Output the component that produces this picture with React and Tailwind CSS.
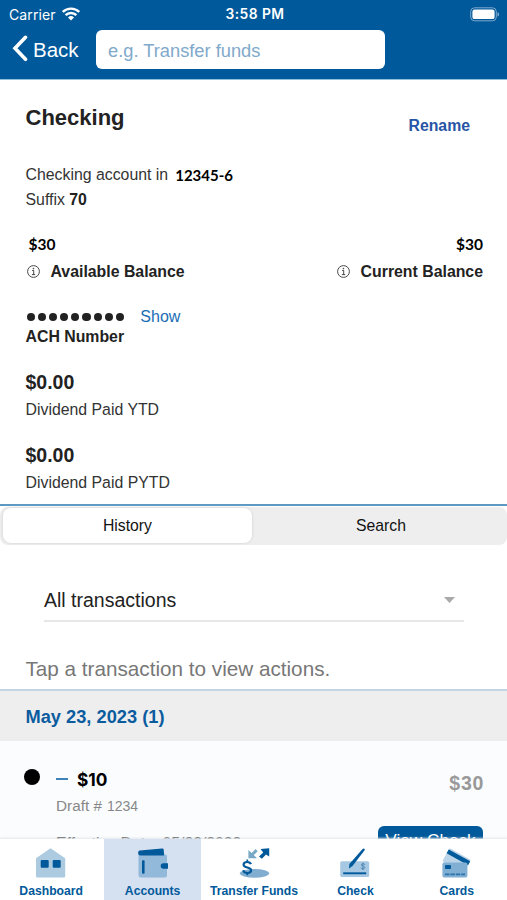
import React from "react";

const sans = "font-['Liberation_Sans',Arial,sans-serif]";

function InfoIcon() {
  return (
    <svg className="h-[13px] w-[13px] shrink-0" viewBox="0 0 13 13" fill="none" stroke="#333" strokeWidth="0.9">
      <circle cx="6.5" cy="6.5" r="5.9" />
      <path d="M5.1 5.5h1.6v4M4.9 9.6h3.3" />
      <circle cx="6.4" cy="3.6" r="0.4" fill="#333" />
    </svg>
  );
}

function WifiIcon() {
  return (
    <svg className="ml-[6px] h-[14px] w-[18px]" viewBox="0 0 18 14" fill="#fff">
      <path d="M9 13.6 6 10.4a4.3 4.3 0 0 1 6 0z" />
      <g fill="none" stroke="#fff" strokeWidth="2.4">
        <path d="M3.6 8.2a7.7 7.7 0 0 1 10.8 0" />
        <path d="M0.8 5a11.7 11.7 0 0 1 16.4 0" />
      </g>
    </svg>
  );
}

function BatteryIcon() {
  return (
    <svg className="h-[15px] w-[31px]" viewBox="0 0 31 15">
      <rect x="0.7" y="0.8" width="25.6" height="13" rx="3.8" fill="none" stroke="#7fa9cc" strokeWidth="1" />
      <rect x="2.4" y="2.5" width="22.2" height="9.6" rx="2.2" fill="#fff" />
      <path d="M27.5 5.2c2.2.6 2.2 3.8 0 4.4z" fill="#7fa9cc" />
    </svg>
  );
}

function DashboardIcon() {
  return (
    <svg className="h-[32px] w-[32px]" viewBox="0 0 32 32">
      <path d="M1 11.2 15.5 1.2 30.2 11.2V29a1.5 1.5 0 0 1-1.5 1.5H2.5A1.5 1.5 0 0 1 1 29z" fill="#accbe1" />
      <rect x="5.7" y="13" width="8" height="7.8" rx="1" fill="#00599a" />
      <rect x="17.7" y="13" width="8" height="7.8" rx="1" fill="#00599a" />
    </svg>
  );
}

function AccountsIcon() {
  return (
    <svg className="h-[32px] w-[32px]" viewBox="0 0 32 32">
      <path d="M1.500 7.500H28q2 0 2 2V28q0 2.500-2.500 2.500H4Q1.500 30.500 1.500 28z" fill="#92b8da" />
      <path d="M1.200 5.200Q1.200 3.600 2.800 3.400L25 1.400q1.600-.1 1.700 1.300l.4 4.700q.1 1.200-1.200 1.200H3.500Q1.200 8.600 1.200 6.500z" fill="#00599a" />
      <rect x="5" y="13.2" width="2.6" height="13.6" rx="1" fill="#00599a" />
      <path d="M31 16.200v5.600h-4.500a2.800 2.800 0 0 1 0-5.600z" fill="#00599a" />
    </svg>
  );
}

function TransferIcon() {
  return (
    <svg className="h-[32px] w-[32px]" viewBox="0 0 32 32">
      <ellipse cx="16.500" cy="26.300" rx="14.600" ry="4.400" fill="#81add0" />
      <path d="M18.400 1.800 14.500 5.700 11.200 2.600V11h8.600L16.600 7.800l3.900-3.800z" fill="#79a8c7" transform="translate(-.8 .3)" />
      <path d="M21 9.600 25.200 5.500 22.600 2l8.600-.8v8.300L28 7.400l-4.100 4.400z" fill="#00599a" />
      <g fill="none" stroke="#00599a" strokeWidth="2.200">
        <path d="M13 17.200c-.6-1.500-2-2.200-3.800-2.200-2.200 0-3.600 1-3.600 2.700 0 3.800 7.500 1.900 7.500 5.600 0 1.700-1.600 2.700-3.700 2.700-2.200 0-3.700-.9-4.200-2.700" />
        <path d="M9.300 12.600v2.700M9.300 25.600v2.600" strokeWidth="1.700" />
      </g>
    </svg>
  );
}

function CheckIcon() {
  return (
    <svg className="h-[32px] w-[32px]" viewBox="0 0 32 32">
      <rect x="1.200" y="14.300" width="29" height="15.800" rx="1.500" fill="#a7c8e2" />
      <path d="M4.200 26.300h23" stroke="#00599a" strokeWidth="1.900" />
      <path d="M25.500 17.400c-.2-1-1-1.300-1.900-1.200-1.900 0-2 2-.1 2.300 2.700.4 2.500 2.900.2 2.900-1.200 0-1.900-.4-2.100-1.300M23.600 15.200v7.400" transform="translate(.3 .5)" fill="none" stroke="#4b86b5" strokeWidth="1" />
      <path d="M23.600 1.900q1.400-.9 2.100.1.300.7-.3 1.600L13.500 19l-3.600 2.400.5-4.300z" fill="#00599a" />
    </svg>
  );
}

function CardsIcon() {
  return (
    <svg className="h-[32px] w-[32px]" viewBox="0 0 32 32">
      <g transform="rotate(29 8 2)">
        <rect x="8" y="1" width="24.500" height="15" rx="1.500" fill="#bcd4e8" />
        <rect x="8" y="2.500" width="24.500" height="4.400" fill="#00599a" />
      </g>
      <rect x="1.400" y="15.500" width="25" height="15" rx="1.800" fill="#81afd3" />
      <rect x="4" y="18" width="6" height="4" rx="1" fill="#00599a" />
      <path d="M4 27.300h20" stroke="#2d73ab" strokeWidth="1.700" strokeDasharray="4.500 0.900" />
    </svg>
  );
}

const tabs = [
  { label: "Dashboard", Icon: DashboardIcon },
  { label: "Accounts", Icon: AccountsIcon, active: true },
  { label: "Transfer Funds", Icon: TransferIcon },
  { label: "Check", Icon: CheckIcon },
  { label: "Cards", Icon: CardsIcon },
];

function Header() {
  return (
    <header className="h-[80px] shrink-0 border-b border-[#8fc0dc] bg-[#00599a] text-white">
      <div className="grid h-[28px] grid-cols-3 items-center pr-[6px] pl-[9px] font-['Inter',sans-serif]">
        <div className="flex items-center text-[14px] tracking-[0.1px]">
          Carrier
          <WifiIcon />
        </div>
        <div className="text-center text-[13.8px] font-semibold tracking-[0.45px]">3:58 PM</div>
        <div className="flex justify-end">
          <BatteryIcon />
        </div>
      </div>
      <div className="flex h-[43px] items-center pl-[12px]">
        <svg className="-mt-[2px] h-[27px] w-[17px]" viewBox="0 0 17 27" fill="none" stroke="#fff" strokeWidth="3.6" strokeLinecap="round">
          <path d="M13.500 2.300 3 13.300 13.500 24.300" />
        </svg>
        <span className="mt-px ml-[4px] w-[46px] text-[20.5px]">Back</span>
        <div className="ml-[17px] flex h-[39px] w-[289px] items-center rounded-[6px] bg-white pl-[12px] text-[18.3px] text-[#80a9cb]">
          <span className="mt-[3px]">e.g. Transfer funds</span>
        </div>
      </div>
    </header>
  );
}

function Amount({ value, label }) {
  return (
    <div>
      <div className="h-[28px] text-[19.5px] leading-[28px] font-bold">{value}</div>
      <div className="h-[28px] text-[15.85px] leading-[28px] text-[#333]">{label}</div>
    </div>
  );
}

function AccountDetails() {
  return (
    <section className="h-[424px] shrink-0 pt-[24px] pr-[24px] pl-[25.5px] text-[15.85px] text-[#222]">
      <div className="flex h-[28px] justify-between">
        <h1 className="text-[22px] leading-[28px] font-bold">Checking</h1>
        <a className="mt-[8px] mr-[13px] text-[15.8px] leading-[28px] font-bold text-[#2754a5]">Rename</a>
      </div>
      <div className="mt-[29px] flex h-[26px] items-center text-[#333]">
        <span className="mt-px">Checking account in</span>
        <span className="mt-[2px] ml-[7px] font-['Lato',sans-serif] text-[15px] font-bold text-black">12345-6</span>
      </div>
      <div className="h-[26px] leading-[26px] text-[#333]">
        Suffix <b className="text-[#222]">70</b>
      </div>
      <div className="mt-[18px] flex h-[28px] items-center justify-between pl-[3px] font-['Lato',sans-serif] text-[15.5px] font-bold text-black">
        <span>$30</span>
        <span>$30</span>
      </div>
      <div className="flex h-[26px] items-center justify-between font-bold">
        <div className="flex items-center gap-[11px] pl-px">
          <InfoIcon />
          Available Balance
        </div>
        <div className="flex items-center gap-[11px]">
          <InfoIcon />
          Current Balance
        </div>
      </div>
      <div className="mt-[22px] flex h-[20px] items-center pl-[1.5px]">
        <div className="flex gap-[3px]">
          {Array.from({ length: 9 }, (_, i) => (
            <span key={i} className="h-[8px] w-[8.1px] rounded-full bg-[#222]" />
          ))}
        </div>
        <a className="ml-[16.5px] text-[16px] text-[#1b6db3]">Show</a>
      </div>
      <div className="h-[20px] leading-[20px] font-bold">ACH Number</div>
      <div className="mt-[21px]">
        <Amount value="$0.00" label="Dividend Paid YTD" />
      </div>
      <div className="mt-[17px]">
        <Amount value="$0.00" label="Dividend Paid PYTD" />
      </div>
    </section>
  );
}

function Transactions() {
  return (
    <section className="flex min-h-0 flex-1 flex-col overflow-hidden">
      <div className="h-[2px] shrink-0 bg-[#5d99c3]" />
      <div className="mt-px flex h-[38px] shrink-0 rounded-[8px] bg-[#eeeeee] pt-px pr-[1px] pb-[2px] pl-[3px] text-[15.75px] text-[#111]">
        <div className="flex w-[249px] items-center justify-center rounded-[8px] bg-white shadow-[0_0_2px_1px_#dedede]">History</div>
        <div className="flex flex-1 items-center justify-center pl-[4px]">Search</div>
      </div>
      <div className="mt-[35px] ml-[44px] flex h-[42px] w-[420px] shrink-0 items-center justify-between border-b-[2px] border-[#e5e7e9] pr-[9px] text-[19.5px] text-[#222]">
        <span className="mt-[2px]">All transactions</span>
        <svg className="h-[6px] w-[11px]" viewBox="0 0 11 6">
          <path d="M0 0h11L5.500 6z" fill="#aaa" />
        </svg>
      </div>
      <p className="mt-[33px] ml-[25.5px] h-[28px] shrink-0 text-[20.7px] leading-[28px] text-[#777]">Tap a transaction to view actions.</p>
      <div className="mt-[6px] flex h-[52px] shrink-0 items-center border-t-[2px] border-[#c3d5e4] bg-[#eeeeee] pl-[25.5px] text-[18.25px] font-bold text-[#0b5c9f]">
        <span className="mt-[2px]">May 23, 2023 (1)</span>
      </div>
      <div className="flex h-[120px] shrink-0 justify-between bg-[#fafcfe] pr-[23px] pl-[24px]">
        <div className="flex">
          <span className="mt-[28px] h-[16px] w-[16px] rounded-full bg-black" />
          <div className="ml-[16px] text-[15.75px] text-[#777]">
            <div className="mt-[25px] flex h-[28px] items-center">
              <span className="-mt-[3px] h-[2px] w-[12px] bg-[#3f82b8]" />
              <span className="ml-[9px] font-['Inter',sans-serif] text-[17.3px] font-bold text-black">$10</span>
            </div>
            <div className="flex h-[24px] items-center gap-[5px] text-[15.3px] text-[#888]">
              <span>Draft #</span>
              <span className="text-[14px]">1234</span>
            </div>
            <div className="mt-[14px] h-[24px] leading-[24px] whitespace-nowrap text-[#555]">Effective Date: 05/23/2023</div>
          </div>
        </div>
        <div className="flex flex-col items-end">
          <div className="mt-[28px] h-[28px] text-[19.5px] leading-[28px] font-bold tracking-[0.7px] text-[#999]">$30</div>
          <div className="mt-[29px] mr-px flex h-[30px] w-[105px] items-center justify-center rounded-[6px] bg-[#00599a] text-[17.2px] whitespace-nowrap text-white">View Check</div>
        </div>
      </div>
    </section>
  );
}

function TabBar() {
  return (
    <nav className="flex h-[61px] shrink-0 bg-white shadow-[0_-1px_2px_#e3e6e9]">
      {tabs.map(({ label, Icon, active }) => (
        <div key={label} className="flex flex-1 justify-center pl-px">
          <div className={`flex w-[97px] flex-col items-center pt-[8px] ${active ? "bg-[#d5e0f1]" : ""}`}>
            <Icon />
            <span className="mt-[4px] text-[12.2px] leading-[16px] font-bold whitespace-nowrap text-[#00599a]">{label}</span>
          </div>
        </div>
      ))}
    </nav>
  );
}

export default function App() {
  return (
    <div className={`flex h-[900px] w-[507px] flex-col overflow-hidden bg-white ${sans}`}>
      <Header />
      <AccountDetails />
      <Transactions />
      <TabBar />
    </div>
  );
}
